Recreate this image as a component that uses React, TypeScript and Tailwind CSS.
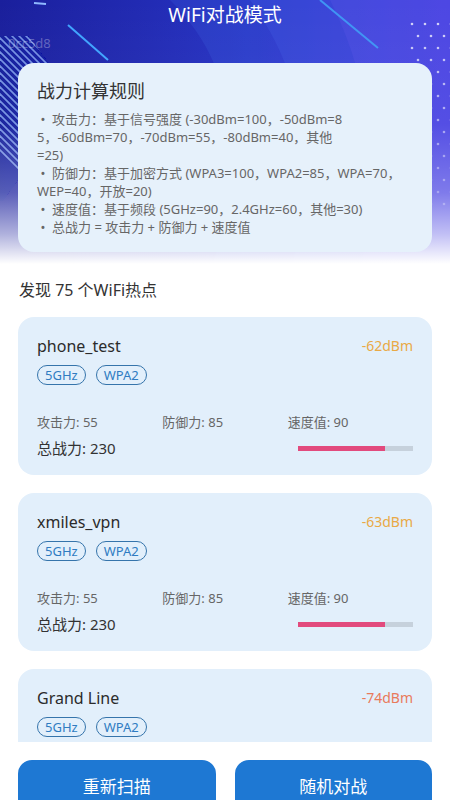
import React from 'react'

type Hotspot = {
  name: string
  signal: string
  signalColor: string
  band: string
  security: string
  attack: number
  defense: number
  speed: number
  total: number
  ratio: number
}

const hotspots: Hotspot[] = [
  { name: 'phone_test', signal: '-62dBm', signalColor: 'text-[#e9a946]', band: '5GHz', security: 'WPA2', attack: 55, defense: 85, speed: 90, total: 230, ratio: 0.76 },
  { name: 'xmiles_vpn', signal: '-63dBm', signalColor: 'text-[#e9a946]', band: '5GHz', security: 'WPA2', attack: 55, defense: 85, speed: 90, total: 230, ratio: 0.76 },
  { name: 'Grand Line', signal: '-74dBm', signalColor: 'text-[#e97a5c]', band: '5GHz', security: 'WPA2', attack: 40, defense: 85, speed: 90, total: 215, ratio: 0.7 },
]

// header backdrop: blue gradient, streaks, stripes and dots
function HeaderArt() {
  const dots: JSX.Element[] = []
  for (let r = 0; r < 16; r++) {
    for (let c = 0; c < 4; c++) {
      const x = 412 + c * 13 + (r % 2) * 6
      const y = 24 + r * 12
      dots.push(<circle key={`${r}-${c}`} cx={x} cy={y} r={1.3} fill="#ffffff" opacity={0.75 - r * 0.03} />)
    }
  }
  const stripes: JSX.Element[] = []
  for (let i = 0; i < 28; i++) {
    const x0 = -120 + i * 7
    stripes.push(<line key={i} x1={x0} y1={30} x2={x0 + 170} y2={200} stroke="#9fc2ff" strokeWidth={1.6} opacity={0.7} />)
  }
  return (
    <svg className="absolute left-0 top-0" width="450" height="275" viewBox="0 0 450 275">
      <defs>
        <linearGradient id="hx" x1="0" y1="0" x2="1" y2="0">
          <stop offset="0" stopColor="#1a1f9c" />
          <stop offset="0.55" stopColor="#2733c4" />
          <stop offset="1" stopColor="#4a2ddc" />
        </linearGradient>
        <linearGradient id="hy" x1="0" y1="0" x2="0" y2="1">
          <stop offset="0" stopColor="#ffffff" stopOpacity="0" />
          <stop offset="0.45" stopColor="#ffffff" stopOpacity="0.04" />
          <stop offset="0.7" stopColor="#ffffff" stopOpacity="0.28" />
          <stop offset="0.85" stopColor="#ffffff" stopOpacity="0.65" />
          <stop offset="0.96" stopColor="#ffffff" stopOpacity="1" />
        </linearGradient>
        <clipPath id="stripeClip">
          <polygon points="0,36 28,36 62,80 40,150 0,205" />
        </clipPath>
      </defs>
      <rect width="450" height="275" fill="url(#hx)" />
      <path d="M170 0 C 230 60, 250 140, 210 275 L 460 275 L 460 0 Z" fill="#3b5fe0" opacity="0.25" />
      <path d="M250 0 C 300 70, 320 150, 290 275 L 460 275 L 460 0 Z" fill="#4a6cf0" opacity="0.2" />
      <path d="M330 0 C 370 80, 380 160, 360 275 L 460 275 L 460 0 Z" fill="#6a5cf0" opacity="0.2" />
      <g clipPath="url(#stripeClip)">{stripes}</g>
      <line x1="34" y1="3" x2="46" y2="4" stroke="#8fb8ff" strokeWidth="2" />
      <line x1="68" y1="25" x2="108" y2="60" stroke="#3fa4ff" strokeWidth="2" />
      <line x1="320" y1="0" x2="378" y2="48" stroke="#3f94f4" strokeWidth="2" />
      {dots}
      <rect width="450" height="275" fill="url(#hy)" />
    </svg>
  )
}

function Tag({ label }: { label: string }) {
  return (
    <span className="flex h-[20px] items-center rounded-full border-[1.5px] border-[#3574ab] px-[7px] text-[13px] leading-none text-[#2f7cc2]">
      {label}
    </span>
  )
}

function HotspotCard({ h }: { h: Hotspot }) {
  return (
    <div className="shrink-0 rounded-[16px] bg-[#e2effb] px-[19px] pb-[17px] pt-[18px]">
      <div className="flex items-center justify-between">
        <span className="text-[16px] leading-[22px] text-[#2b2b2b]">{h.name}</span>
        <span className={`text-[14px] leading-[22px] ${h.signalColor}`}>{h.signal}</span>
      </div>
      <div className="mt-[8px] flex gap-[10px]">
        <Tag label={h.band} />
        <Tag label={h.security} />
      </div>
      <div className="mt-[28px] grid grid-cols-3 text-[13px] leading-[18px] text-[#666]">
        <span>攻击力: {h.attack}</span>
        <span>防御力: {h.defense}</span>
        <span>速度值: {h.speed}</span>
      </div>
      <div className="mt-[7px] flex items-center justify-between">
        <span className="text-[15px] leading-[20px] text-[#333]">总战力: {h.total}</span>
        <div className="h-[5px] w-[115px] bg-[#c6d1dc]">
          <div className="h-full bg-[#e24a7d]" style={{ width: `${h.ratio * 100}%` }} />
        </div>
      </div>
    </div>
  )
}

export default function App() {
  return (
    <div className="relative flex h-[800px] w-[450px] flex-col overflow-hidden bg-white font-['Noto_Sans','Noto_Sans_CJK_SC',sans-serif]">
      <div className="relative h-[742px] shrink-0 overflow-hidden">
        <HeaderArt />
        <div className="relative">
          <div className="flex h-[30px] items-center justify-center text-[19px] text-white">WiFi对战模式</div>
          <div className="h-[33px] pl-[8px] pt-[4px] text-[13px] leading-[18px] text-white/30">0cc5d8</div>

          <div className="mx-[18px] rounded-[16px] bg-[#e6f1fb] px-[19px] pb-[16px] pt-[17px]">
            <div className="text-[18px] leading-[22px] text-[#333]">战力计算规则</div>
            <div className="mt-[8px] whitespace-nowrap text-[13px] leading-[18px] text-[#666]">
              <div>&nbsp;•&nbsp;&nbsp;攻击力：基于信号强度 (-30dBm=100，-50dBm=8</div>
              <div>5，-60dBm=70，-70dBm=55，-80dBm=40，其他</div>
              <div>=25)</div>
              <div>&nbsp;•&nbsp;&nbsp;防御力：基于加密方式 (WPA3=100，WPA2=85，WPA=70，</div>
              <div>WEP=40，开放=20)</div>
              <div>&nbsp;•&nbsp;&nbsp;速度值：基于频段 (5GHz=90，2.4GHz=60，其他=30)</div>
              <div>&nbsp;•&nbsp;&nbsp;总战力 = 攻击力 + 防御力 + 速度值</div>
            </div>
          </div>

          <div className="px-[19px] pb-[16px] pt-[27px] text-[16px] leading-[22px] text-[#333]">发现 75 个WiFi热点</div>

          <div className="flex flex-col gap-[18px] px-[18px]">
            {hotspots.map((h) => (
              <HotspotCard key={h.name} h={h} />
            ))}
          </div>
        </div>
      </div>

      <div className="flex shrink-0 gap-[19px] bg-white px-[18px] pt-[18px]">
        <button className="flex h-[54px] flex-1 items-center justify-center rounded-[14px] bg-[#1e78d3] text-[17px] text-white">
          重新扫描
        </button>
        <button className="flex h-[54px] flex-1 items-center justify-center rounded-[14px] bg-[#1e78d3] text-[17px] text-white">
          随机对战
        </button>
      </div>
    </div>
  )
}
